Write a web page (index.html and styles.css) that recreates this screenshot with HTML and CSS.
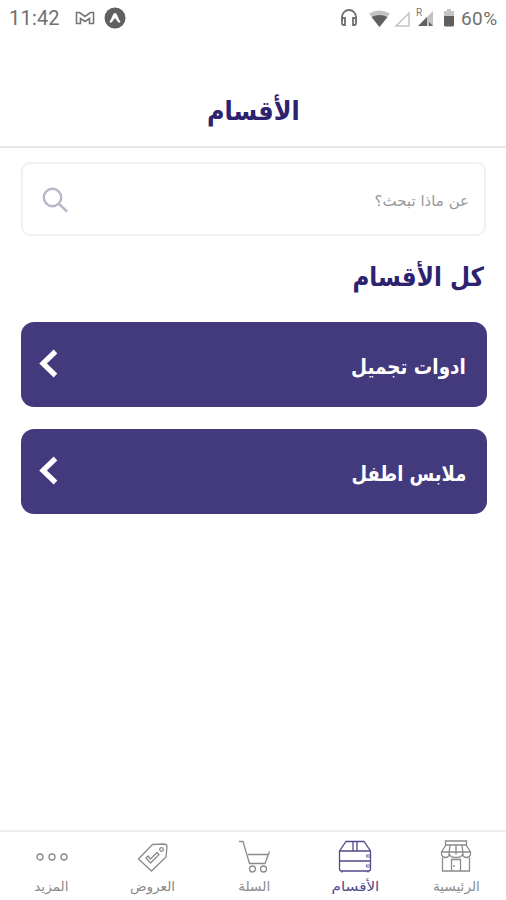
FILE: index.html
```html
<!DOCTYPE html>
<html lang="ar" dir="rtl">
<head>
<meta charset="utf-8">
<title>الأقسام</title>
<link rel="stylesheet" href="styles.css">
</head>
<body>
<div class="app">
  <div class="status" dir="ltr">
    <span class="clock">11:42</span>
    <svg class="gmail" width="20" height="14" viewBox="0 0 20 14"><path d="M1.500 1.500h3L10 5.500l5.500-4h3v11h-4V7.500L10 10.500 5.500 7.500v5h-4z"/></svg>
    <svg class="expo" width="22" height="22" viewBox="0 0 22 22"><circle cx="11" cy="11" r="10.500"/><path d="M5.500 15C8 11 9 6 11 6s3 5 5.500 9c-2 2-3-1-5.500-4-2.500 3-3.500 6-5.500 4z"/></svg>
    <span class="spacer"></span>
    <svg class="sys" width="94" height="26" viewBox="0 0 94 26">
      <path class="line" d="M3 16v-4a7 7 0 0 1 14 0v4"/><path class="line" d="M3 13h3v7H4.500Q3 20 3 18zM17 13h-3v7h1.500q1.500 0 1.500-2z"/>
      <path class="pale" d="M30 8.500q10-6 21 0L40.500 22z"/><path class="dark" d="M32.500 12q8-4 16 0l-8 10z"/>
      <path class="outline" d="M57 21L70 8v13z"/>
      <path class="pale" d="M79 21L94 6v15z"/><path class="dark" d="M79 21l9-9v9zM90 17l4 4h-4z"/>
      <text x="77" y="11">R</text>
    </svg>
    <svg class="battery" width="12" height="20" viewBox="0 0 12 20"><path class="pale" d="M1 3h3V1h4v2h3v6H1z"/><path class="dark" d="M1 8h10v9q0 1.500-1.500 1.500h-7Q1 18.500 1 17z"/></svg>
    <span class="percent">60%</span>
  </div>
  <header class="header"><h1>الأقسام</h1></header>
  <main class="main">
    <div class="search">
      <span class="placeholder">عن ماذا تبحث؟</span>
      <svg width="28" height="28" viewBox="0 0 28 28"><circle cx="11.500" cy="10.500" r="8.700"/><path d="M18 17l8 7.500"/></svg>
    </div>
    <h2>كل الأقسام</h2>
    <div class="card"><span class="label first">ادوات تجميل</span><svg width="22" height="32" viewBox="0 0 22 32"><path d="M18.500 3.500L6 15.500l12.500 12"/></svg></div>
    <div class="card"><span class="label second">ملابس اطفل</span><svg width="22" height="32" viewBox="0 0 22 32"><path d="M18.500 3.500L6 15.500l12.500 12"/></svg></div>
  </main>
  <nav class="nav">
    <div class="item">
      <svg width="34" height="36" viewBox="0 0 34 36"><path d="M6.500 2h21v4h-21zM7 6L2.500 13v2.500q1 3 4 3t4-3q1 3 6.500 3t6.500-3q1 3 4 3t4-3V13L27 6M2.500 13h29M11 6l-1 9.500M17 6v9.500M23 6l1 9.500M3.500 18.500V32h27V18.500M12.500 32V20.500h9V32M15 26v2"/></svg>
      <span class="n1">الرئيسية</span>
    </div>
    <div class="item active">
      <svg width="34" height="36" viewBox="0 0 34 36"><path d="M1.500 12L8 2.500h18L32.500 12v18q0 2-2 2h-27q-2 0-2-2zM1.500 12h31M2 22h30M15 2.500V12M19 2.500V12M4 32v1.500M30 32v1.500"/><path class="knob" d="M32 16h-3.500v2H32M32 26h-3.500v2H32"/></svg>
      <span class="n2">الأقسام</span>
    </div>
    <div class="item">
      <svg width="34" height="36" viewBox="0 0 34 36"><path d="M2 2.500h4L12.500 24.500h15.500L32.500 12.500M11 15.500h20.500"/><circle cx="15.500" cy="30" r="3"/><circle cx="26.500" cy="30" r="3"/></svg>
      <span class="n3">السلة</span>
    </div>
    <div class="item">
      <svg width="34" height="36" viewBox="0 0 34 36"><path d="M16.500 5.500L28 5q3 0 3 3l-1 10-14.500 14L2.500 20zM10 19l2-2 2.500 3 6.500-6.500 2 2-8.500 8.500z"/><circle cx="25.500" cy="10.500" r="1.800"/></svg>
      <span class="n4">العروض</span>
    </div>
    <div class="item">
      <svg width="34" height="36" viewBox="0 0 34 36"><circle cx="5" cy="18" r="3"/><circle cx="17" cy="18" r="3"/><circle cx="29" cy="18" r="3"/></svg>
      <span class="n5">المزيد</span>
    </div>
  </nav>
</div>
</body>
</html>
```
FILE: styles.css
```css
* { box-sizing: border-box; }
body { margin: 0; background: #fff; font-family: "DejaVu Sans", sans-serif; }
svg { display: block; flex: none; fill: none; }
.app { width: 506px; height: 900px; display: flex; flex-direction: column; overflow: hidden; }
.status { height: 36px; flex: none; display: flex; align-items: center; padding: 0 8px 0 9px; font-family: Roboto, sans-serif; font-size: 20px; color: #707070; }
.clock { width: 50px; letter-spacing: 0.2px; }
.gmail { margin-left: 16px; stroke: #777; stroke-width: 1.6; }
.expo { margin-left: 9px; }
.expo circle { fill: #606060; }
.expo path { fill: #fff; }
.spacer { flex: 1; }
.sys { margin-right: 10px; }
.sys text { font: 10px Roboto, sans-serif; fill: #777; }
.line { stroke: #707070; stroke-width: 1.8; }
.outline { stroke: #c4c4c4; stroke-width: 1.5; }
.pale { fill: #c4c4c4; }
.dark { fill: #606060; }
.battery { margin-right: 6px; }
.percent { width: 37px; font-size: 19px; letter-spacing: 0.4px; }
.header { height: 112px; flex: none; border-bottom: 2px solid #e8e8e8; display: flex; justify-content: center; padding-top: 60px; }
h1, h2 { margin: 0; color: #2d2270; font-size: 25px; line-height: 32px; font-weight: bold; white-space: nowrap; }
h1 { transform: scale(0.96, 1.06); }
.main { flex: 1; padding: 14px 19px 0; }
.search { height: 74px; margin: 0 1px 0 2px; border: 2px solid #f0f0f0; border-radius: 9px; display: flex; justify-content: space-between; align-items: center; padding: 3px 15px 0 18px; }
.search svg { stroke: #b9b6cb; stroke-width: 2.4; }
.placeholder { font-size: 15px; color: #999; padding-top: 1px; }
h2 { margin: 26px 3px 28px; transform: scale(0.925, 1.06); transform-origin: right center; }
.card { height: 85px; margin: 0 0 22px 2px; border-radius: 13px; background: #433a7e; color: #fff; display: flex; justify-content: space-between; align-items: center; padding: 0 21px 0 16px; }
.card svg { stroke: #fff; stroke-width: 5.2; margin-bottom: 2px; }
.label { font-size: 20px; font-weight: bold; white-space: nowrap; padding-top: 4px; transform-origin: right center; }
.first { transform: scale(0.92, 1.05); }
.second { transform: scale(0.895, 1.05); }
.nav { height: 70px; flex: none; border-top: 2px solid #eee; display: grid; grid-template-columns: repeat(5, 1fr); }
.item { display: flex; flex-direction: column; align-items: center; padding: 7px 0 0; color: #8b8b8b; font-size: 13px; line-height: 20px; gap: 2px; white-space: nowrap; }
.item svg { stroke: currentColor; stroke-width: 1.3; transform: translateX(1px); }
.item .knob { stroke-width: 0.8; }
.item span { transform: translateX(1px) scaleX(1.05); }
.item .n2 { transform: translateX(1px) scaleX(1.17); }
.active { color: #51498c; }
```
